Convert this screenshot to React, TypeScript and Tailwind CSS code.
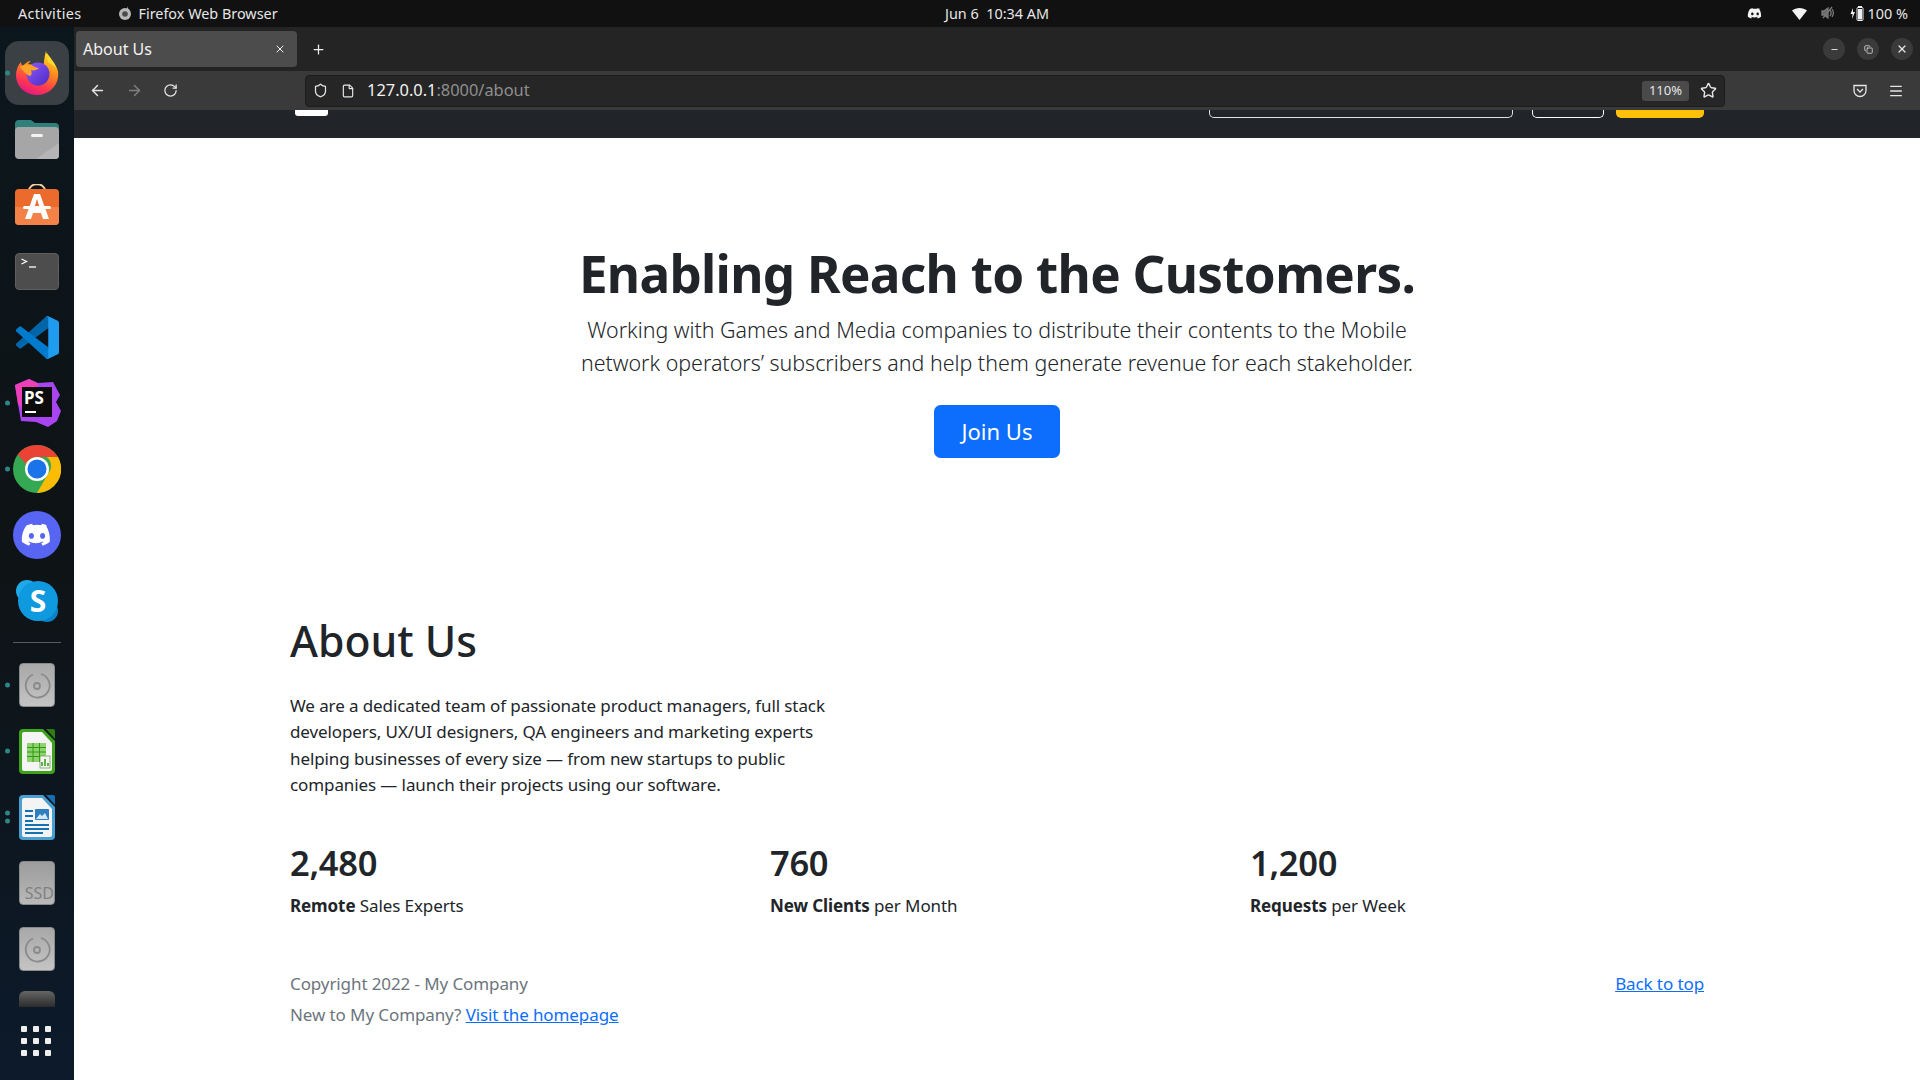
import React from "react";
import { ArrowLeft, ArrowRight, RotateCw, Shield, File, Star, Menu, X, Plus, Minus, Copy } from "lucide-react";

const ui = "font-['Noto_Sans','Open_Sans',sans-serif]";

function Firefox() {
  return (
    <svg width="46" height="46" viewBox="0 0 46 46">
      <defs>
        <linearGradient id="ff1" x1="0.7" y1="0" x2="0.3" y2="1">
          <stop offset="0" stopColor="#ffe226" />
          <stop offset="0.4" stopColor="#ff8a1e" />
          <stop offset="0.75" stopColor="#ff3750" />
          <stop offset="1" stopColor="#e31587" />
        </linearGradient>
        <linearGradient id="ff2" x1="0" y1="0" x2="1" y2="1">
          <stop offset="0" stopColor="#9059ff" />
          <stop offset="1" stopColor="#4a2bc0" />
        </linearGradient>
      </defs>
      <path d="M32 1c1 5 3 7 7 11 4 5 6 9 5 15-1 10-10 18-21 18C11 45 2 36 2 25c0-5 2-10 5-13 0 2 1 3 2 4 2-3 5-5 8-5-2 1-3 3-3 4 6-2 12 0 15 5 1-6 1-13 3-19z" fill="url(#ff1)" />
      <circle cx="24" cy="24" r="11.500" fill="url(#ff2)" />
      <path d="M6 17c4-3 9-4 13-1 2 1 4 2 6 2-2 2-5 3-8 2 1 3 1 5-1 6-3-1-7-5-10-9z" fill="#ffa428" />
      <path d="M33 3c3 5 8 9 9 15-3-3-6-5-8-6-1-3-1-6-1-9z" fill="#ffd92e" />
    </svg>
  );
}

function Folder() {
  return (
    <svg width="46" height="42" viewBox="0 0 46 42">
      <path d="M1 6a4 4 0 0 1 4-4h12l4 3h20a4 4 0 0 1 4 4v12H1z" fill="#2f7f7b" />
      <rect x="1" y="9" width="44" height="32" rx="4" fill="#a6a6a6" />
      <path d="M45 25v12a4 4 0 0 1-4 4H22z" fill="#b5b5b5" />
      <rect x="17" y="16" width="12" height="3" rx="1.500" fill="#f2f2f2" />
    </svg>
  );
}

function AppStore() {
  return (
    <svg width="46" height="42" viewBox="0 4 46 42">
      <path d="M15 11c0-9 16-9 16 0" fill="none" stroke="#f3cf9f" strokeWidth="2" />
      <rect x="1" y="9" width="44" height="36" rx="4" fill="#ea6b2c" />
      <path d="M1 27h44v14a4 4 0 0 1-4 4H5a4 4 0 0 1-4-4z" fill="#f28248" />
      <path d="M20 14h6l9 25h-6l-2-6H19l-2 6h-6zM23 19l-3 10h6z" fill="#fff" />
      <rect x="9" y="26" width="28" height="3" rx="1.500" fill="#fff" />
    </svg>
  );
}

function Terminal() {
  return (
    <div className="relative h-[37px] w-[44px] rounded-[4px] bg-[#4d4d4d] border border-[#5e5e5e]">
      <svg className="absolute left-[5px] top-[4px]" width="18" height="12" viewBox="0 0 18 12">
        <path d="M0.500 1l5 2.500-5 2.500" fill="none" stroke="#fff" strokeWidth="1.300" />
        <path d="M8 9h7" stroke="#fff" strokeWidth="1.300" />
      </svg>
    </div>
  );
}

function VSCode() {
  return (
    <svg width="43" height="43" viewBox="0 0 100 100">
      <path d="M96.500 10.800L75.900.9a6.200 6.200 0 0 0-7.100 1.200L1.400 63.600a4.100 4.100 0 0 0 0 6.100l5.500 5a4.100 4.100 0 0 0 5.300.2L93.300 14.400c2.700-2.100 6.700-.1 6.700 3.400v-.2a6.200 6.200 0 0 0-3.500-5.600z" fill="#0065a9" />
      <path d="M96.500 89.200L75.900 99.100a6.200 6.200 0 0 1-7.100-1.200L1.400 36.400a4.100 4.100 0 0 1 0-6.100l5.500-5a4.100 4.100 0 0 1 5.300-.2l81.100 61.500c2.700 2.100 6.700.1 6.700-3.400v.2a6.200 6.200 0 0 1-3.500 5.600z" fill="#007acc" />
      <path d="M75.900 99.100a6.200 6.200 0 0 1-7.100-1.200c2.300 2.300 6.200.7 6.200-2.600V4.700c0-3.300-3.900-4.900-6.200-2.600a6.200 6.200 0 0 1 7.100-1.200l20.600 9.900a6.200 6.200 0 0 1 3.500 5.600v67.200a6.200 6.200 0 0 1-3.500 5.600z" fill="#1f9cf0" />
    </svg>
  );
}

function PhpStorm() {
  return (
    <svg width="48" height="50" viewBox="0 0 48 50">
      <path d="M2 7l14-6 9 4 15-1 7 13-4 7 5 9-4 10-9 6-12-5-15-1L5 26z" fill="#a945f0" />
      <path d="M2 7l14-6 10 5L9 30 5 26z" fill="#ec3fb8" />
      <rect x="9" y="9" width="30" height="30" fill="#0c0c0c" />
      <text x="11" y="26" fontSize="17" fontWeight="700" fill="#fff" fontFamily="'Noto Sans',sans-serif">PS</text>
      <rect x="12" y="33" width="11" height="2" fill="#fff" />
    </svg>
  );
}

function Chrome() {
  return (
    <svg width="48" height="48" viewBox="0 0 48 48">
      <circle cx="24" cy="24" r="24" fill="#34a853" />
      <path d="M24 0a24 24 0 0 1 21 12H24a12 12 0 0 0-11 7L4.500 9.500A24 24 0 0 1 24 0z" fill="#ea4335" />
      <path d="M45 12a24 24 0 0 1-21 36l11-19a12 12 0 0 0-1-17z" fill="#fbbc05" />
      <circle cx="24" cy="24" r="12" fill="#fff" />
      <circle cx="24" cy="24" r="9.500" fill="#1a73e8" />
    </svg>
  );
}

const discordGlyph = "M33.500 14.500A21 21 0 0 0 28.400 13l-.7 1.300a19 19 0 0 0-7.400 0L19.600 13a21 21 0 0 0-5.100 1.500C11 19.500 10.200 24.500 10.600 29.300a21 21 0 0 0 6.300 3.200l1.300-2.200-2-1 .5-.4a15 15 0 0 0 12.600 0l.5.400-2 1 1.300 2.200a21 21 0 0 0 6.300-3.200c.5-5.600-.8-10.500-3.400-14.800zM19 26.400c-1.300 0-2.300-1.200-2.300-2.600s1-2.600 2.300-2.600 2.300 1.200 2.300 2.600-1 2.600-2.300 2.600zm10 0c-1.300 0-2.300-1.200-2.300-2.600s1-2.600 2.300-2.600 2.300 1.200 2.300 2.600-1 2.600-2.300 2.600z";

function Discord() {
  return (
    <svg width="48" height="48" viewBox="0 0 48 48">
      <circle cx="24" cy="24" r="24" fill="#5865f2" />
      <g transform="translate(24 24) scale(1.120) translate(-24 -23)">
        <path d={discordGlyph} fill="#fff" />
      </g>
    </svg>
  );
}

function DiscordTray() {
  return (
    <svg width="16" height="13" viewBox="9 11 30 24">
      <path d={discordGlyph} fill="#f2f2f2" />
    </svg>
  );
}

function Skype() {
  return (
    <svg width="44" height="44" viewBox="0 0 44 44">
      <circle cx="12" cy="12" r="11" fill="#1fa9e8" />
      <circle cx="32" cy="32" r="11" fill="#0b83c9" />
      <circle cx="23" cy="22" r="20" fill="#0f9ae0" />
      <text x="23" y="33" textAnchor="middle" fontSize="30" fontWeight="700" fill="#fff" fontFamily="'Noto Sans',sans-serif">S</text>
    </svg>
  );
}

function Disc() {
  return (
    <div className="flex h-[44px] w-[36px] items-center justify-center rounded-[4px] bg-gradient-to-b from-[#a8a8a8] to-[#c4c4c4] border border-[#8a8a8a]">
      <svg width="28" height="28" viewBox="0 0 28 28" fill="none" stroke="#8a8a8a" strokeWidth="1.800">
        <path d="M18 3a12 12 0 1 1-8 .5" />
        <circle cx="14" cy="15" r="3" />
      </svg>
    </div>
  );
}

function Sheet({ c, dark, light, children }: { c: string; dark: string; light: string; children: React.ReactNode }) {
  return (
    <svg width="36" height="45" viewBox="0 0 36 45">
      <path d="M4 0h20l12 12v29a4 4 0 0 1-4 4H4a4 4 0 0 1-4-4V4a4 4 0 0 1 4-4z" fill={c} />
      <path d="M5 3h18l10 11v26a2 2 0 0 1-2 2H5a2 2 0 0 1-2-2V5a2 2 0 0 1 2-2z" fill={light} />
      <path d="M27 0h7a2 2 0 0 1 2 2v8z" fill={dark} />
      {children}
    </svg>
  );
}

function Dot({ n = 1 }: { n?: number }) {
  return (
    <div className="absolute left-[5px] top-1/2 flex -translate-y-1/2 flex-col gap-[3px]">
      {Array.from({ length: n }).map((_, i) => (
        <span key={i} className="h-[5px] w-[5px] rounded-full bg-[#2f8583]" />
      ))}
    </div>
  );
}

function DockItem({ children, dots = 0, active = false }: { children: React.ReactNode; dots?: number; active?: boolean }) {
  return (
    <div className="relative flex h-[66px] w-[74px] shrink-0 items-center justify-center">
      {active && <div className="absolute left-[5px] top-[1px] h-[64px] w-[64px] rounded-[14px] bg-[#3a4043]" />}
      <div className="relative flex items-center justify-center">{children}</div>
      {dots > 0 && <Dot n={dots} />}
    </div>
  );
}

function Dock() {
  return (
    <aside className="relative flex w-[74px] shrink-0 flex-col items-center overflow-hidden bg-gradient-to-b from-[#0b161d] via-[#0e1315] to-[#0c1a2b] pt-[13px]">
      <DockItem dots={1} active><Firefox /></DockItem>
      <DockItem><Folder /></DockItem>
      <DockItem><AppStore /></DockItem>
      <DockItem><Terminal /></DockItem>
      <DockItem><VSCode /></DockItem>
      <DockItem dots={1}><PhpStorm /></DockItem>
      <DockItem dots={1}><Chrome /></DockItem>
      <DockItem><Discord /></DockItem>
      <DockItem><Skype /></DockItem>
      <div className="mt-[8px] mb-[9px] h-px w-[48px] shrink-0 bg-[#555b5f]" />
      <DockItem dots={1}><Disc /></DockItem>
      <DockItem dots={1}>
        <Sheet c="#3ea21d" dark="#2d7d12" light="#f4f4f4">
          <rect x="8" y="14" width="19" height="19" fill="#8fd36f" />
          <path d="M8 18.500h19M8 23h19M8 27.500h19M14 14v19M20.500 14v19" stroke="#2f9a12" strokeWidth="1" />
          <rect x="21" y="27" width="10" height="12" fill="#f4f4f4" stroke="#5a9a40" strokeWidth="0.700" />
          <path d="M23 37v-4M26 37v-7M29 37v-3" stroke="#2f9a12" strokeWidth="1.500" />
        </Sheet>
      </DockItem>
      <DockItem dots={2}>
        <Sheet c="#4a9fd2" dark="#176fb0" light="#f4f4f4">
          <path d="M6 16h8M6 21h8M6 26h8M6 30h24M6 34h24M6 38h18" stroke="#1272b5" strokeWidth="2" />
          <rect x="16" y="14" width="14" height="11" rx="1" fill="#2d7fc0" />
          <path d="M17 24l4-5 2 2 3-3 3 6z" fill="#d4e9f7" />
        </Sheet>
      </DockItem>
      <DockItem>
        <div className="relative h-[44px] w-[36px] overflow-hidden rounded-[4px] bg-gradient-to-b from-[#9c9c9c] to-[#b9b9b9] border border-[#8a8a8a]">
          <span className={`absolute right-[0px] bottom-[3px] text-[16px] leading-none text-[#808080] ${ui}`}>SSD</span>
        </div>
      </DockItem>
      <DockItem><Disc /></DockItem>
      <div className="mt-[9px] h-[16px] w-[36px] shrink-0 rounded-t-[6px] bg-gradient-to-b from-[#666] to-[#2c2c2c]" />
      <div className="absolute bottom-[24px] left-[21px] grid grid-cols-3 gap-[6px]">
        {Array.from({ length: 9 }).map((_, i) => (
          <span key={i} className="h-[6px] w-[6px] rounded-[1px] bg-[#eeeeee]" />
        ))}
      </div>
    </aside>
  );
}

function TopBar() {
  return (
    <header className={`flex h-[27px] shrink-0 items-center justify-between bg-[#111111] text-[14.400px] text-[#e6e6e6] ${ui}`}>
      <div className="flex items-center">
        <span className="ml-[18px] tracking-[0.35px]">Activities</span>
        <svg className="ml-[37px] mr-[6px]" width="14" height="14" viewBox="0 0 14 14">
          <circle cx="7" cy="8" r="6" fill="#b8b8b8" />
          <path d="M9 0c0 2 2 3 3 5L9 6z" fill="#b8b8b8" />
          <circle cx="7" cy="8" r="2.800" fill="#4a4a4a" />
        </svg>
        <span>Firefox Web Browser</span>
      </div>
      <span className="absolute left-[945px]">Jun 6&nbsp;&nbsp;10:34 AM</span>
      <div className="flex items-center">
        <DiscordTray />
        <svg className="ml-[29px]" width="15" height="13" viewBox="0 0 15 13">
          <path d="M0 3.500C4 0 11 0 15 3.500L7.500 13z" fill="#f2f2f2" />
        </svg>
        <svg className="ml-[14px]" width="14" height="14" viewBox="0 0 14 14" fill="none" stroke="#7a7a7a" strokeWidth="1.300">
          <path d="M1 5v4h2l4 3V2L3 5z" fill="#6a6a6a" />
          <path d="M9 4c1.500 2 1.500 4 0 6M11 3c2 3 2 5 0 8M2 12L11 1" />
        </svg>
        <svg className="ml-[15px]" width="14" height="15" viewBox="0 0 14 15">
          <path d="M3 2L0.500 8h2L2 13l3-7H3z" fill="#eee" />
          <rect x="7" y="1.500" width="6" height="13" rx="1" fill="none" stroke="#eee" />
          <rect x="8" y="0" width="4" height="2" fill="#eee" />
          <rect x="8" y="3" width="4" height="10.500" fill="#eee" />
        </svg>
        <span className="ml-[4px] mr-[12px]">100 %</span>
      </div>
    </header>
  );
}

function WinBtn({ children }: { children: React.ReactNode }) {
  return <span className="flex h-[22px] w-[22px] items-center justify-center rounded-full bg-[#3a3a3a] text-[#e6e6e6]">{children}</span>;
}

function Browser() {
  return (
    <>
      <div className={`flex h-[44px] shrink-0 items-center bg-[#242424] pl-[2px] pr-[7px] ${ui}`}>
        <div className="flex h-[36px] w-[221px] items-center justify-between rounded-[4px] bg-[#4c4c4c] pl-[7px] pr-[11px] text-[16px] text-[#f2f2f2]">
          <span>About Us</span>
          <X size={12} />
        </div>
        <Plus size={15} className="ml-[14px] text-[#eee]" />
        <div className="ml-auto flex items-center gap-[12px]">
          <WinBtn><Minus size={9} strokeWidth={2.500} /></WinBtn>
          <WinBtn><Copy size={9} strokeWidth={2} /></WinBtn>
          <WinBtn><X size={12} strokeWidth={2.500} /></WinBtn>
        </div>
      </div>
      <div className={`flex h-[39px] shrink-0 items-center bg-[#3a3a3a] ${ui}`}>
        <ArrowLeft size={17} className="ml-[15px] text-[#e6e6e6]" />
        <ArrowRight size={17} className="ml-[20px] text-[#808080]" />
        <RotateCw size={15} className="ml-[20px] text-[#e6e6e6]" />
        <div className="ml-[127px] flex h-[32px] w-[1420px] items-center rounded-[4px] border border-[#1d1d1d] bg-[#262626]">
          <Shield size={15} className="ml-[7px] text-[#e6e6e6]" />
          <File size={14} className="ml-[13px] text-[#e6e6e6]" />
          <span className="ml-[12px] text-[16.400px] text-[#f2f2f2]">127.0.0.1<span className="text-[#8f8f8f]">:8000/about</span></span>
          <span className="ml-auto flex h-[20px] w-[47px] items-center justify-center rounded-[3px] bg-[#4a4a4a] text-[13px] text-[#e6e6e6]">110%</span>
          <Star size={17} className="ml-[11px] mr-[7px] text-[#e6e6e6]" />
        </div>
        <svg className="ml-[128px]" width="14" height="14" viewBox="0 0 14 14" fill="none" stroke="#e6e6e6" strokeWidth="1.300">
          <path d="M1 1.500h12v5a6 6 0 0 1-12 0z" />
          <path d="M4 5l3 3 3-3" />
        </svg>
        <Menu size={16} className="ml-[21px] text-[#e6e6e6]" />
      </div>
    </>
  );
}

function Stat({ num, bold, rest }: { num: string; bold: string; rest: string }) {
  return (
    <div>
      <div className="text-[34.500px] font-semibold leading-[42px] tracking-[-0.3px] text-[#212529]">{num}</div>
      <p className="mt-[9px] text-[17px] leading-[26.400px] tracking-[-0.1px] text-[#212529]"><strong className="font-bold">{bold}</strong> {rest}</p>
    </div>
  );
}

function Page() {
  return (
    <main className="min-h-0 flex-1 bg-white font-['Noto_Sans',sans-serif]">
      <nav className="flex h-[28px] items-start overflow-hidden bg-[#212529]">
        <span className="ml-[221px] h-[6px] w-[33px] rounded-b-[3px] bg-white" />
        <span className="ml-[881px] h-[8px] w-[304px] rounded-b-[5px] border border-t-0 border-[#dee2e6]" />
        <span className="ml-[19px] h-[8px] w-[72px] rounded-b-[5px] border border-t-0 border-white" />
        <span className="ml-[12px] h-[8px] w-[88px] rounded-b-[5px] bg-[#ffc107]" />
      </nav>
      <section className="flex flex-col items-center pt-[104px] text-center text-[#212529]">
        <h1 className="text-[51.200px] font-bold leading-[63px] tracking-[-0.7px]">Enabling Reach to the Customers.</h1>
        <p className="mt-[8px] text-[21.400px] font-light leading-[33px]">Working with Games and Media companies to distribute their contents to the Mobile<br />network operators’ subscribers and help them generate revenue for each stakeholder.</p>
        <button className="mt-[26px] h-[53px] w-[126px] rounded-[6.600px] bg-[#0d6efd] text-[22px] text-white">Join Us</button>
      </section>
      <section className="mx-[216px] mt-[156px]">
        <h2 className="text-[42.700px] font-medium leading-[53px] text-[#212529]">About Us</h2>
        <p className="mt-[26px] w-[570px] text-[17px] leading-[26.400px] tracking-[-0.1px] text-[#212529]">We are a dedicated team of passionate product managers, full stack developers, UX/UI designers, QA engineers and marketing experts helping businesses of every size — from new startups to public companies — launch their projects using our software.</p>
        <div className="mt-[43px] grid grid-cols-[480px_480px_1fr]">
          <Stat num="2,480" bold="Remote" rest="Sales Experts" />
          <Stat num="760" bold="New Clients" rest="per Month" />
          <Stat num="1,200" bold="Requests" rest="per Week" />
        </div>
        <footer className="mt-[52px] text-[17px] leading-[26.400px] tracking-[-0.1px] text-[#6c757d]">
          <div className="flex justify-between">
            <p>Copyright 2022 - My Company</p>
            <a className="text-[#0d6efd] underline">Back to top</a>
          </div>
          <p className="mt-[5px]">New to My Company? <a className="text-[#0d6efd] underline">Visit the homepage</a></p>
        </footer>
      </section>
    </main>
  );
}

export default function App() {
  return (
    <div className="relative flex h-[1080px] w-[1920px] flex-col overflow-hidden">
      <TopBar />
      <div className="flex min-h-0 flex-1">
        <Dock />
        <div className="flex min-w-0 flex-1 flex-col">
          <Browser />
          <Page />
        </div>
      </div>
    </div>
  );
}
